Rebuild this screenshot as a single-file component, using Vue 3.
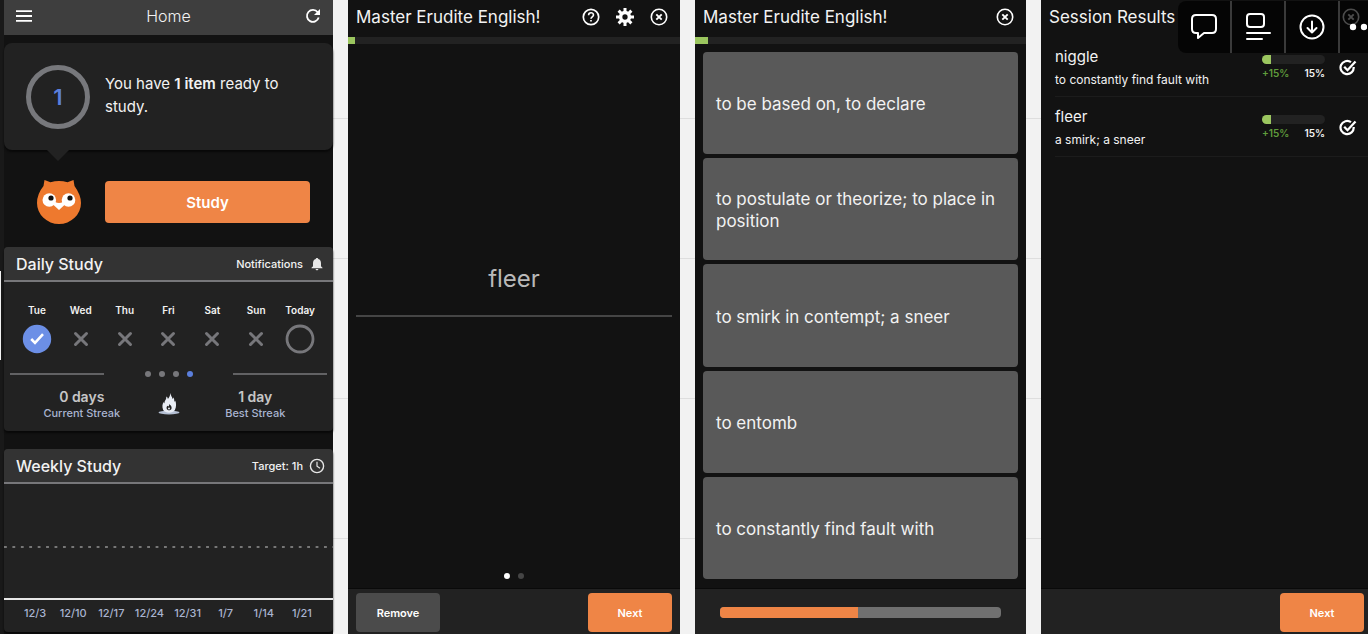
<script setup>
const days = [
  { name: 'Tue', state: 'done' },
  { name: 'Wed', state: 'missed' },
  { name: 'Thu', state: 'missed' },
  { name: 'Fri', state: 'missed' },
  { name: 'Sat', state: 'missed' },
  { name: 'Sun', state: 'missed' },
  { name: 'Today', state: 'open' },
]
const weeks = ['12/3', '12/10', '12/17', '12/24', '12/31', '1/7', '1/14', '1/21']
const answers = [
  'to be based on, to declare',
  'to postulate or theorize; to place in position',
  'to smirk in contempt; a sneer',
  'to entomb',
  'to constantly find fault with',
]
const results = [
  { word: 'niggle', meaning: 'to constantly find fault with', gain: 15, total: 15 },
  { word: 'fleer', meaning: 'a smirk; a sneer', gain: 15, total: 15 },
]
</script>

<template>
  <div class="board">
    <section class="screen home">
      <span class="handle"></span>
      <header class="home-bar">
        <button class="icon-btn" aria-label="Menu">
          <svg width="16" height="12" viewBox="0 0 16 12"><path d="M0 1.2h16M0 6h16M0 10.8h16" stroke="#fff" stroke-width="1.8" /></svg>
        </button>
        <h1>Home</h1>
        <button class="icon-btn" aria-label="Refresh">
          <svg width="16" height="16" viewBox="0 0 16 16" fill="none"><path d="M12.7 4.2A6 6 0 1 0 13.7 9.6" stroke="#fff" stroke-width="1.8" /><path d="M15 1v6H9z" fill="#fff" /></svg>
        </button>
      </header>

      <div class="bubble">
        <div class="ring">1</div>
        <p>You have <b>1 item</b> ready to study.</p>
        <span class="tail"></span>
      </div>

      <div class="study-row">
        <svg class="owl" width="44" height="44" viewBox="0 0 44 44">
          <path d="M7.500 0 13.500 2.200Q22 0 30.500 2.200L36.500 0 37.500 6Q44 15 44 23A22 21 0 0 1 0 23Q0 14 6.500 6Z" fill="#ee792e" />
          <circle cx="12.300" cy="20" r="6.800" fill="#fff" />
          <circle cx="31.500" cy="20" r="6.800" fill="#fff" />
          <path d="M16 24.500 18 22Q22 24 26 22L28 24.500 22 30Z" fill="#fff" />
          <circle cx="14" cy="18" r="2.600" fill="#111" />
          <circle cx="33" cy="18" r="2.600" fill="#111" />
        </svg>
        <button class="study">Study</button>
      </div>

      <article class="card daily">
        <header class="card-head">
          <h2>Daily Study</h2>
          <button class="head-link">Notifications
            <svg width="16" height="14" viewBox="0 0 16 14"><path d="M8 1C8.700 1 9.200 1.400 9.200 2 11.200 2.600 12 4.200 12 6v3.200l1.500 1.500v.6h-11v-.6L4 9.200V6c0-1.800.8-3.400 2.800-4C6.800 1.400 7.300 1 8 1ZM6.600 11.900h2.800c0 1.900-2.800 1.900-2.800 0Z" fill="#e6e6e6" /></svg>
          </button>
        </header>
        <ul class="days">
          <li v-for="d in days" :key="d.name">
            <span>{{ d.name }}</span>
            <svg width="30" height="30" viewBox="0 0 30 30" fill="none">
              <template v-if="d.state === 'done'">
                <circle cx="15" cy="15" r="14.200" fill="#6c8fe6" />
                <path d="m9.200 15 3.800 3.800 8-8.600" stroke="#fff" stroke-width="2.600" />
              </template>
              <path v-else-if="d.state === 'missed'" d="m9.500 9.500 11 11m0-11-11 11" stroke="#77777b" stroke-width="3" stroke-linecap="round" />
              <circle v-else cx="15" cy="15" r="13" stroke="#77777b" stroke-width="2.800" />
            </svg>
          </li>
        </ul>
        <div class="pager">
          <hr />
          <div class="pager-dots"><i></i><i></i><i></i><i class="on"></i></div>
          <hr />
        </div>
        <div class="streaks">
          <div><strong>0 days</strong><small>Current Streak</small></div>
          <svg width="22" height="22" viewBox="0 0 22 22">
            <ellipse cx="11" cy="19.500" rx="10.500" ry="1.900" fill="#b4bfd3" />
            <path d="M12.500 0c.2 2.500 1.600 4 2.200 6 .5-.4.700-1 .7-1.700 1 1.500.7 3 1.200 4.500.4-.4.600-.7.600-1.200 1.200 3 1.300 6-.3 9.400-2 3.500-9.500 3.600-11.700 0C3.800 13.500 4.400 10.500 5.800 9c.1.700.3 1 .7 1.400C6.300 7.500 8.500 7 8.300 3.500c1 .6 1.500 1.500 1.600 2.600C11.300 4.500 12 2.500 12.500 0Z" fill="#e9edf5" />
            <path d="M11.300 11c1.200 1.200 2.600 2.300 2.300 4.200-.4 2.700-4.600 2.700-5 0-.1-1.200.3-1.900.9-2.400l.8.800c1-1 .9-1.600 1-2.600Z" fill="#222" />
            <circle cx="11" cy="15.500" r="1" fill="#e9edf5" />
          </svg>
          <div><strong>1 day</strong><small>Best Streak</small></div>
        </div>
      </article>

      <article class="card weekly">
        <header class="card-head">
          <h2>Weekly Study</h2>
          <button class="head-link">Target: 1h
            <svg width="16" height="16" viewBox="0 0 16 16" fill="none" stroke="#e6e6e6"><circle cx="8" cy="8" r="6.600" stroke-width="1.400" /><path d="M8 3.800V8.200l3 2" stroke-width="1.200" /></svg>
          </button>
        </header>
        <div class="chart"><div class="goal"></div></div>
        <ol class="weeks"><li v-for="w in weeks" :key="w">{{ w }}</li></ol>
      </article>
    </section>

    <section class="screen prompt">
      <header class="bar">
        <h1>Master Erudite English!</h1>
        <div class="tools">
          <button class="icon-btn" aria-label="Help">
            <svg width="18" height="18" viewBox="0 0 18 18" fill="none" stroke="#fff"><circle cx="9" cy="9" r="7.700" stroke-width="1.700" /><path d="M6.600 7.200C6.600 3.900 11.500 4.100 11.500 7 11.500 8.800 9 8.900 9 10.700" stroke-width="1.600" /><path d="M9 11.900v1.700" stroke-width="1.700" /></svg>
          </button>
          <button class="icon-btn" aria-label="Settings">
            <svg width="18" height="18" viewBox="0 0 18 18" fill="none" stroke="#fff"><circle cx="9" cy="9" r="4.400" stroke-width="3.500" /><path d="M9 0v4M9 14v4M0 9h4M14 9h4M2.600 2.600l3 3M12.400 12.400l3 3M15.400 2.600l-3 3M5.600 12.400l-3 3" stroke-width="3" /></svg>
          </button>
          <button class="icon-btn" aria-label="Close">
            <svg width="18" height="18" viewBox="0 0 18 18" fill="none" stroke="#fff"><circle cx="9" cy="9" r="7.700" stroke-width="1.600" /><path d="m6.300 6.300 5.400 5.400m0-5.400-5.400 5.400" stroke-width="1.900" /></svg>
          </button>
        </div>
      </header>
      <div class="meter"><div :style="{ width: '2%' }"></div></div>
      <main class="word-area">
        <p class="word">fleer</p>
        <div class="slides"><i class="on"></i><i></i></div>
      </main>
      <footer class="foot">
        <button class="action grey">Remove</button>
        <button class="action">Next</button>
      </footer>
    </section>

    <section class="screen quiz">
      <header class="bar">
        <h1>Master Erudite English!</h1>
        <button class="icon-btn" aria-label="Close">
          <svg width="18" height="18" viewBox="0 0 18 18" fill="none" stroke="#fff"><circle cx="9" cy="9" r="7.700" stroke-width="1.600" /><path d="m6.300 6.300 5.400 5.400m0-5.400-5.400 5.400" stroke-width="1.900" /></svg>
        </button>
      </header>
      <div class="meter"><div :style="{ width: '4%' }"></div></div>
      <main class="answers">
        <button v-for="a in answers" :key="a">{{ a }}</button>
      </main>
      <footer class="foot timer"><div class="track"><div :style="{ width: '49%' }"></div></div></footer>
    </section>

    <section class="screen session">
      <header class="bar">
        <h1>Session Results</h1>
        <button class="icon-btn" aria-label="Close">
          <svg width="18" height="18" viewBox="0 0 18 18" fill="none" stroke="#fff"><circle cx="9" cy="9" r="7.700" stroke-width="1.600" /><path d="m6.300 6.300 5.400 5.400m0-5.400-5.400 5.400" stroke-width="1.900" /></svg>
        </button>
      </header>
      <main class="results">
        <div v-for="r in results" :key="r.word" class="result">
          <div class="term"><h2>{{ r.word }}</h2><p>{{ r.meaning }}</p></div>
          <div class="score">
            <div class="level"><div :style="{ width: r.total + '%' }"></div></div>
            <div class="nums"><span class="gain">+{{ r.gain }}%</span><span>{{ r.total }}%</span></div>
          </div>
          <svg width="18" height="18" viewBox="0 0 18 18" fill="none" stroke="#fff"><path d="M12 3.200A6.600 6.600 0 1 0 14.700 8" stroke-width="2.200" /><path d="m5.200 7.800 3.300 3.400L16.500 2.500" stroke-width="2.300" /></svg>
        </div>
      </main>
      <footer class="foot end"><button class="action">Next</button></footer>

      <nav class="overlay" aria-label="Image tools">
        <button aria-label="Comment">
          <svg width="28" height="28" viewBox="0 0 28 28" fill="none" stroke="#fff" stroke-width="2" stroke-linejoin="round"><path d="M6 2h16q4 0 4 4v10q0 4-4 4H14l-6 5v-5H6q-4 0-4-4V6q0-4 4-4Z" /></svg>
        </button>
        <button aria-label="Details">
          <svg width="28" height="28" viewBox="0 0 28 28" fill="none" stroke="#fff" stroke-width="2" stroke-linecap="round"><rect x="3" y="1" width="17" height="13" rx="3" /><path d="M3 20h23M3 26h15" /></svg>
        </button>
        <button aria-label="Download">
          <svg width="28" height="28" viewBox="0 0 28 28" fill="none" stroke="#fff" stroke-width="2" stroke-linecap="round" stroke-linejoin="round"><circle cx="14" cy="14" r="11.500" /><path d="M14 8.500v11M9.500 15l4.500 4.500 4.500-4.500" /></svg>
        </button>
        <button class="more" aria-label="More">
          <svg width="18" height="8" viewBox="0 0 18 8" fill="#fff"><circle cx="4" cy="4" r="3.200" /><circle cx="15" cy="4" r="3.200" /></svg>
        </button>
      </nav>
    </section>
  </div>
</template>

<style>
body { background: #f2f2f2; }
</style>

<style scoped>
* { box-sizing: border-box; }
h1, h2, p, ul, ol { margin: 0; padding: 0; font-weight: 400; list-style: none; }
button { border: 0; padding: 0; background: none; color: inherit; font: inherit; cursor: pointer; }
svg { display: block; flex: none; }

.board {
  display: grid;
  grid-template-columns: 333fr 332fr 331fr 327fr;
  gap: 15px;
  min-height: 100vh;
  font-family: Inter, "Liberation Sans", sans-serif;
  color: #f2f2f2;
  background: repeating-linear-gradient(#f2f2f2 0 118px, #dedede 118px 119px, #f2f2f2 119px 140px);
}
.screen { position: relative; display: flex; flex-direction: column; min-width: 0; background: #121212; }

.home { border-left: 4px solid #191919; }
.handle { position: absolute; left: -4px; top: 271px; width: 1px; height: 89px; background: #f2f2f2; }
.home-bar { display: flex; align-items: center; justify-content: space-between; height: 35px; padding: 0 12px 4px; background: #3e3e3e; }
.home-bar h1 { font-size: 16px; line-height: 20px; font-weight: 300; }
.bubble { position: relative; display: flex; align-items: center; gap: 15px; margin-top: 8px; padding: 0 22px; height: 107px; border-radius: 8px; background: #222; box-shadow: 0 2px 2px #090909; }
.ring { display: grid; place-items: center; flex: none; width: 64px; height: 64px; border: 5px solid #77787c; border-radius: 50%; color: #5b7fdc; font-size: 22px; font-weight: 600; }
.bubble p { font-size: 15px; line-height: 23px; padding-bottom: 4px; }
.bubble b { font-weight: 600; }
.tail { position: absolute; top: 100%; left: 43px; border: 11px solid transparent; border-top-color: #222; border-bottom: 0; }
.study-row { display: flex; align-items: center; gap: 24px; margin-top: 30px; padding: 0 23px 0 33px; }
.study { flex: 1; height: 42px; border-radius: 4px; background: #ef8546; color: #fff; font-size: 15px; font-weight: 600; }

.card { border-radius: 4px; background: #222; box-shadow: 0 2px 2px #090909; overflow: hidden; }
.daily { margin-top: 23px; height: 184px; }
.weekly { display: flex; flex-direction: column; flex: 1; margin: 18px 0 2px; }
.card-head { display: flex; align-items: center; justify-content: space-between; flex: none; height: 35px; padding: 0 8px 0 12px; background: #333; border-bottom: 2px solid #77777a; }
.card-head h2 { font-size: 16px; line-height: 20px; font-weight: 500; }
.head-link { display: flex; align-items: center; gap: 6px; font-size: 11px; font-weight: 500; }
.days { display: grid; grid-template-columns: repeat(7, 1fr); padding: 21px 11px 0; }
.days li { display: flex; flex-direction: column; align-items: center; gap: 7px; font-size: 10px; line-height: 14px; font-weight: 600; }
.pager { display: flex; align-items: center; justify-content: space-between; padding: 14px 6px 0; height: 26px; }
.pager hr { width: 94px; height: 2px; margin: 0; border: 0; background: #626264; }
.pager-dots, .slides { display: flex; gap: 8px; }
.pager-dots i, .slides i { width: 6px; height: 6px; border-radius: 50%; background: #77777b; }
.pager-dots i.on { background: #5b7fdc; }
.streaks { display: grid; grid-template-columns: 1fr 22px 1fr; align-items: center; padding: 8px 2px 0; text-align: center; }
.streaks strong { display: block; color: #c6c6c6; font-size: 14px; line-height: 18px; font-weight: 600; }
.streaks small { display: block; color: #a9b4d0; font-size: 11px; line-height: 14px; font-weight: 500; }
.chart { display: flex; flex: 1; flex-direction: column; justify-content: center; padding-top: 12px; border-bottom: 2px solid #e8e8e8; }
.goal { height: 2px; background: linear-gradient(90deg, #777 0 36%, transparent 36%) 0 0 / calc(100% / 39) 2px; }
.weeks { display: grid; grid-template-columns: repeat(8, 1fr); padding: 5px 12px 11px; color: #a9b4d0; font-size: 11px; line-height: 16px; font-weight: 500; text-align: center; }

.bar { display: flex; align-items: center; justify-content: space-between; height: 37px; padding: 0 12px 4px 8px; }
.bar h1 { font-size: 17px; line-height: 24px; }
.tools { display: flex; gap: 16px; }
.meter { height: 7px; background: #222; }
.meter div { height: 100%; background: #9bc65f; }
.word-area { display: flex; flex: 1; flex-direction: column; align-items: center; padding: 0 8px 9px; }
.word { margin: auto 0; width: 100%; padding: 0 0 20px; border-bottom: 2px solid #454545; color: #b9b9b9; font-size: 24px; line-height: 32px; text-align: center; }
.slides { padding-top: 38px; }
.slides i { background: #454545; }
.slides i.on { background: #fff; }
.foot { display: flex; align-items: center; justify-content: space-between; flex: none; height: 46px; padding: 2px 8px 0; background: #222; border-top: 1px solid #0a0a0a; }
.action { width: 84px; height: 39px; border-radius: 4px; background: #ef8546; color: #fff; font-size: 11px; font-weight: 600; }
.action.grey { background: #4b4b4b; }
.answers { display: flex; flex: 1; flex-direction: column; gap: 4px; padding: 8px 8px 9px; }
.answers button { flex: 1; padding: 2px 13px 0; border-radius: 4px; background: #595959; font-size: 17px; line-height: 22px; text-align: left; }
.timer { padding: 2px 25px 0; }
.track { flex: 1; height: 11px; border-radius: 4px; background: #707070; overflow: hidden; }
.track div { height: 100%; background: #ef8546; }

.session .bar { padding-right: 8px; }
.results { flex: 1; padding-left: 14px; }
.result { display: flex; align-items: center; height: 60px; padding: 2px 11px 0 0; border-bottom: 1px solid #1c1c1c; }
.term { flex: 1; }
.term h2 { font-size: 15px; line-height: 24px; }
.term p { font-size: 12px; line-height: 22px; }
.score { width: 63px; margin-right: 14px; }
.level { height: 9px; border-radius: 5px; background: #222; overflow: hidden; }
.level div { height: 100%; background: #9bc65f; }
.nums { display: flex; justify-content: space-between; padding-top: 2px; font-size: 10px; line-height: 14px; font-weight: 600; }
.gain { color: #609d3c; }
.end { justify-content: flex-end; padding-right: 4px; }
.overlay { position: absolute; top: 1px; right: 0; display: flex; height: 52px; border-radius: 8px 0 0 8px; background: rgba(0, 0, 0, 0.7); overflow: hidden; }
.overlay button { display: grid; place-items: center; width: 54px; border-right: 2px solid #3a3a3a; }
.overlay .more { width: 28px; padding-left: 8px; border: 0; }
</style>
